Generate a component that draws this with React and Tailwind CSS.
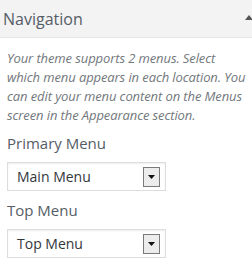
export default function App() {
  const font = { fontFamily: '"Open Sans", "Noto Sans", sans-serif' };
  const Select = ({ value }) => (
    <div className="w-[159px] h-[29px] border border-[#dddddd] bg-white shadow-[inset_0_1px_2px_rgba(0,0,0,0.07)] flex items-center justify-between pl-[9px] pr-[5px]">
      <span className="text-[14px] text-[#32373c] leading-none">{value}</span>
      <div className="w-[17px] h-[20px] border border-[#7a7a7a] bg-[#ececec] flex items-center justify-center">
        <svg width="7" height="4" viewBox="0 0 7 4"><path d="M0 0h7L3.5 4z" fill="#111" /></svg>
      </div>
    </div>
  );
  return (
    <div className="w-[252px] h-[280px] bg-white overflow-hidden" style={font}>
      <div className="h-[38px] bg-[#f3f3f3] border-b border-[#e5e5e5] flex items-center justify-between pl-[3px] pr-0">
        <span className="text-[16px] text-[#555d66]">Navigation</span>
        <svg width="8" height="5" viewBox="0 0 8 5" className="-mr-[1px] -mt-[2px]"><path d="M0 5L4 0l4 5z" fill="#555" /></svg>
      </div>
      <div className="pl-[7px] pr-[2px] pt-[11px]">
        <p className="text-[13px] italic leading-[19px] text-[#72777c] tracking-[-0.1px]">
          Your theme supports 2 menus. Select which menu appears in each location. You can edit your menu content on the Menus screen in the Appearance section.
        </p>
        <div className="mt-[8px] text-[15px] text-[#555d66] leading-[20px]">Primary Menu</div>
        <div className="mt-[9px]"><Select value="Main Menu" /></div>
        <div className="mt-[9px] text-[15px] text-[#555d66] leading-[20px]">Top Menu</div>
        <div className="mt-[9px]"><Select value="Top Menu" /></div>
      </div>
    </div>
  );
}
